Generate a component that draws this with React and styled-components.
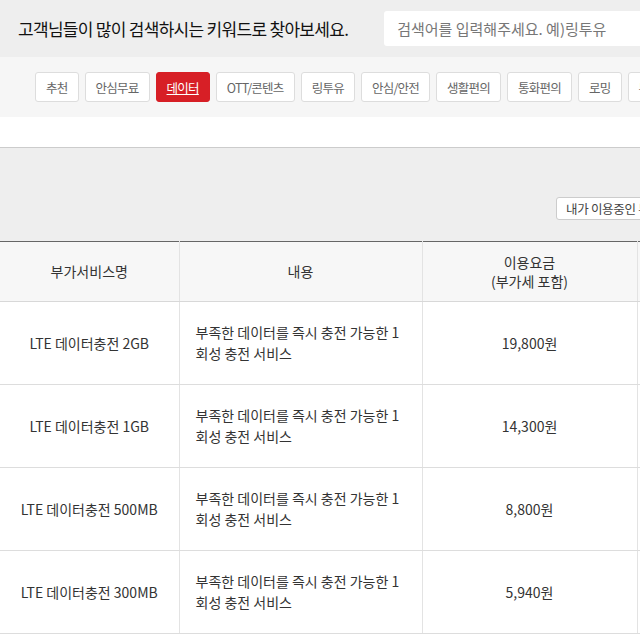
import React from "react";
import styled, { createGlobalStyle } from "styled-components";

const GlobalStyle = createGlobalStyle`
  body {
    margin: 0;
    background: #fff;
    font-family: "Noto Sans CJK KR", "Noto Sans", sans-serif;
    color: #333;
    overflow: hidden;
  }
`;

const tabs = [
  "추천",
  "안심무료",
  "데이터",
  "OTT/콘텐츠",
  "링투유",
  "안심/안전",
  "생활편의",
  "통화편의",
  "로밍",
  "부가기능",
];

const rows = [
  { name: "LTE 데이터충전 2GB", price: "19,800원" },
  { name: "LTE 데이터충전 1GB", price: "14,300원" },
  { name: "LTE 데이터충전 500MB", price: "8,800원" },
  { name: "LTE 데이터충전 300MB", price: "5,940원" },
];

const App = () => {
  return (
    <Page>
      <GlobalStyle />
      <SearchBar>
        <Title>고객님들이 많이 검색하시는 키워드로 찾아보세요.</Title>
        <SearchInput placeholder="검색어를 입력해주세요. 예)링투유" />
      </SearchBar>
      <TabBar>
        {tabs.map((t) => (
          <Tab key={t} active={t === "데이터"}>
            {t}
          </Tab>
        ))}
      </TabBar>
      <Gap />
      <FilterBox>
        <MyButton>내가 이용중인 부가서비스</MyButton>
      </FilterBox>
      <Table>
        <colgroup>
          <col style={{ width: 179 }} />
          <col style={{ width: 243 }} />
          <col style={{ width: 215 }} />
          <col style={{ width: 160 }} />
        </colgroup>
        <thead>
          <tr>
            <Th>부가서비스명</Th>
            <Th>내용</Th>
            <Th>
              이용요금
              <br />
              (부가세 포함)
            </Th>
            <Th />
          </tr>
        </thead>
        <tbody>
          {rows.map((r) => (
            <tr key={r.name}>
              <Td>{r.name}</Td>
              <Td align="left">부족한 데이터를 즉시 충전 가능한 1회성 충전 서비스</Td>
              <Td>{r.price}</Td>
              <Td />
            </tr>
          ))}
        </tbody>
      </Table>
    </Page>
  );
};

const Page = styled.div`
  width: 800px;
`;

const SearchBar = styled.div`
  height: 57px;
  background: #eeeeee;
  display: flex;
  align-items: center;
  gap: 36px;
  padding: 0 0 0 18px;
`;

const Title = styled.h2`
  margin: 0;
  font-size: 17px;
  font-weight: 400;
  color: #111;
  letter-spacing: -0.7px;
  white-space: nowrap;
`;

const SearchInput = styled.input`
  flex-shrink: 0;
  width: 320px;
  height: 35px;
  box-sizing: border-box;
  border: none;
  border-radius: 3px;
  background: #fff;
  padding: 0 13px;
  font-family: inherit;
  font-size: 15px;
  letter-spacing: 0;
  outline: none;

  &::placeholder {
    color: #777;
  }
`;

const TabBar = styled.div`
  height: 60px;
  background: #f6f6f6;
  display: flex;
  align-items: center;
  gap: 6px;
  padding-left: 35px;
`;

const Tab = styled.button`
  flex-shrink: 0;
  height: 30px;
  box-sizing: border-box;
  padding: 0 10px;
  border: 1px solid ${(p) => (p.active ? "#d71f26" : "#dddddd")};
  border-radius: 3px;
  background: ${(p) => (p.active ? "#d71f26" : "#fff")};
  color: ${(p) => (p.active ? "#fff" : "#666")};
  text-decoration: ${(p) => (p.active ? "underline" : "none")};
  font-family: inherit;
  font-size: 12.5px;
  letter-spacing: -0.75px;
  white-space: nowrap;
`;

const Gap = styled.div`
  height: 30px;
`;

const FilterBox = styled.div`
  height: 94px;
  box-sizing: border-box;
  background: #eeeeee;
  border-top: 1px solid #cccccc;
  display: flex;
  align-items: flex-end;
  padding: 0 0 21px 556px;
`;

const MyButton = styled.button`
  height: 23px;
  box-sizing: border-box;
  padding: 0 9px;
  background: #fff;
  border: 1px solid #cccccc;
  border-radius: 3px;
  color: #444;
  font-family: inherit;
  font-size: 12.5px;
  letter-spacing: -0.3px;
  white-space: nowrap;
`;

const Table = styled.table`
  border-collapse: collapse;
  table-layout: fixed;
  width: 797px;
  border-top: 1px solid #666;
`;

const Th = styled.th`
  height: 59px;
  padding: 0;
  background: #f7f7f7;
  border-right: 1px solid #e3e3e3;
  border-bottom: 1px solid #d8d8d8;
  font-weight: 400;
  font-size: 14px;
  line-height: 19px;
  color: #333;
  letter-spacing: 0;
`;

const Td = styled.td`
  height: 82px;
  padding: 0 16px;
  border-right: 1px solid #e3e3e3;
  border-bottom: 1px solid #dddddd;
  text-align: ${(p) => p.align || "center"};
  font-size: 14px;
  line-height: 21px;
  color: #333;
  letter-spacing: 0;
`;

export default App;
